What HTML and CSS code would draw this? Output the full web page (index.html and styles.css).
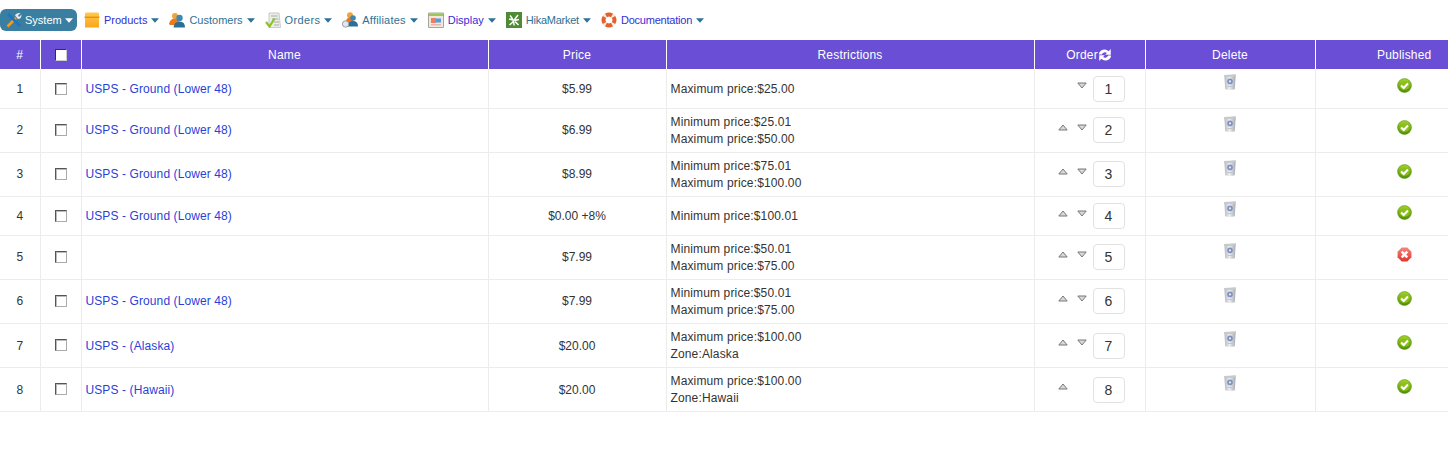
FILE: index.html
```html
<!DOCTYPE html>
<html lang="en">
<head>
<meta charset="utf-8">
<title>Shipping methods</title>
<link rel="stylesheet" href="styles.css">
</head>
<body>
<svg class="defs" width="0" height="0" aria-hidden="true">
  <defs>
    <linearGradient id="bin" x1="0" x2="1" y1="0" y2="0"><stop offset="0" stop-color="#b4b8bc"/><stop offset=".45" stop-color="#eceef1"/><stop offset="1" stop-color="#a6aaae"/></linearGradient>
    <linearGradient id="ok" x1="0" x2="0" y1="0" y2="1"><stop offset="0" stop-color="#a4d42a"/><stop offset="1" stop-color="#4f8f06"/></linearGradient>
    <linearGradient id="bad" x1="0" x2="0" y1="0" y2="1"><stop offset="0" stop-color="#f7847c"/><stop offset="1" stop-color="#e0352c"/></linearGradient>
    <linearGradient id="box" x1="0" x2="0" y1="0" y2="1"><stop offset="0" stop-color="#ffc84a"/><stop offset="1" stop-color="#fba51c"/></linearGradient>
    <symbol id="trash" viewBox="0 0 12 16">
      <path d="M.3 1 L11.7 .4 L10.8 15.2 Q6 16.2 1.2 15.2Z" fill="url(#bin)"/>
      <path d="M.3 1 L11.7 .4 V2.4 Q6 3.2 .3 2.7Z" fill="#c6c9cd"/>
      <circle cx="6" cy="7.4" r="2.8" fill="#7f90c4"/><circle cx="6" cy="7.4" r="1.1" fill="#e6e9f4"/>
      <path d="M3.4 12.5H8.6" stroke="#c2c5ca"/>
    </symbol>
    <symbol id="yes" viewBox="0 0 16 16">
      <circle cx="8" cy="8" r="7.4" fill="url(#ok)" stroke="#5a8f10" stroke-width=".6"/>
      <ellipse cx="8" cy="8.4" rx="5" ry="4.2" fill="#8cbf1e"/>
      <path d="M4.4 8 L7.1 10.6 L11.7 5.8" fill="none" stroke="#fff" stroke-width="2.2"/>
    </symbol>
    <symbol id="no" viewBox="0 0 16 16">
      <path d="M5 .6 H11 L15.4 5 V11 L11 15.4 H5 L.6 11 V5Z" fill="url(#bad)"/>
      <path d="M5 5 L11 11 M11 5 L5 11" stroke="#fff" stroke-width="2.6"/>
    </symbol>
    <symbol id="up" viewBox="0 0 10 7"><path d="M5 1 L9.2 6 H.8Z" fill="#d9d9d9" stroke="#777"/></symbol>
    <symbol id="down" viewBox="0 0 10 7"><path d="M5 6 L9.2 1 H.8Z" fill="#d9d9d9" stroke="#777"/></symbol>
    <symbol id="caret" viewBox="0 0 9 5"><path d="M0 0H9L4.5 5Z"/></symbol>
  </defs>
</svg>

<nav class="menu">
  <a class="item item-active" href="#">
    <svg class="ico" viewBox="0 0 16 16"><path d="M1.5 14.5 L10 6" stroke="#f39a1f" stroke-width="2.6"/><path d="M2 2 L14 14" stroke="#1d74c4" stroke-width="2.6"/><path d="M9 3.5 Q10 .5 14.5 1 L12 3.5 L13 5 L15.5 2.5 Q15.5 7 12 7Z" fill="#e4e8ec"/></svg>
    <span class="lbl">System</span><svg class="caret"><use href="#caret"/></svg>
  </a>
  <a class="item blue" href="#">
    <svg class="ico" viewBox="0 0 16 16"><path d="M1 2Q1 .5 2.5 .5H13.5Q15 .5 15 2V15.5H1Z" fill="url(#box)"/><path d="M.5 4.6H15.5V6H.5Z" fill="#e8910f"/></svg>
    <span class="lbl">Products</span><svg class="caret"><use href="#caret"/></svg>
  </a>
  <a class="item teal" href="#">
    <svg class="ico" viewBox="0 0 16 16"><circle cx="6" cy="4" r="3" fill="#f5a13a"/><path d="M0 12Q1 6.5 6 6.5Q9 6.5 10 10V13H1Z" fill="#ec7a1a"/><circle cx="10.5" cy="6" r="3.2" fill="#3d87b0"/><path d="M4.5 15.5Q5 9.5 10.5 9.5Q16 9.5 16 15.5Z" fill="#2b6f96"/></svg>
    <span class="lbl">Customers</span><svg class="caret"><use href="#caret"/></svg>
  </a>
  <a class="item teal sp-o" href="#">
    <svg class="ico" viewBox="0 0 16 16"><path d="M4 1H14L15.5 15.5H4Z" fill="#eceee8" stroke="#b4b8ae" stroke-width=".7"/><path d="M6 4H12.5M7 7H13.5M9 10H14M9 13H14" stroke="#a3aaa3"/><path d="M1 10L4.5 14.5L9.5 6.5" fill="none" stroke="#8fc02c" stroke-width="2.2"/></svg>
    <span class="lbl">Orders</span><svg class="caret"><use href="#caret"/></svg>
  </a>
  <a class="item teal sp-a" href="#">
    <svg class="ico" viewBox="0 0 16 16"><circle cx="8" cy="3.2" r="3" fill="#f5a13a"/><path d="M4 10Q4 5.5 8 5.5Q11 5.5 11 9L8 12Z" fill="#ec7a1a"/><circle cx="11" cy="6" r="2.8" fill="#3d87b0"/><path d="M6 14.5Q6 9 11 9Q16 9 16 14.5Z" fill="#2b6f96"/><circle cx="3.6" cy="12" r="3.2" fill="#e4e8ee" stroke="#7d8ca0" stroke-width=".8"/></svg>
    <span class="lbl">Affiliates</span><svg class="caret"><use href="#caret"/></svg>
  </a>
  <a class="item blue" href="#">
    <svg class="ico" viewBox="0 0 16 16"><path d="M.5 1H15.5V15.5H.5Z" fill="#f0e8dc" stroke="#a8a498"/><path d="M1 1.5H15V4H1Z" fill="#98c75a"/><path d="M3 6H8V11H3Z" fill="#ee7d66"/><path d="M8 6.5H13V10.5H8Z" fill="#4f9fdc"/><path d="M3 12.8H13" stroke="#e0a0a0"/></svg>
    <span class="lbl">Display</span><svg class="caret"><use href="#caret"/></svg>
  </a>
  <a class="item teal sp-h" href="#">
    <svg class="ico" viewBox="0 0 16 16"><path d="M0 0H16V16H0Z" fill="#4f8a36"/><path d="M8.2 13.5Q7.5 7 4 3.5M8 8.5Q10 5.5 12 3M7.5 8L3 7M8.5 8.5L13 7.5M7.5 9.5L3.5 13M9 9.5L12.5 13" fill="none" stroke="#fff" stroke-width="1.5"/></svg>
    <span class="lbl">HikaMarket</span><svg class="caret"><use href="#caret"/></svg>
  </a>
  <a class="item blue sp-d" href="#">
    <svg class="ico" viewBox="0 0 16 16"><circle cx="8" cy="8" r="5.4" fill="none" stroke="#f4ece6" stroke-width="4.6"/><path d="M4 1.8A7.5 7.5 0 0 1 12 1.8L10 5.2A3.4 3.4 0 0 0 6 5.2ZM4 14.2A7.5 7.5 0 0 0 12 14.2L10 10.8A3.4 3.4 0 0 1 6 10.8ZM1.8 4A7.5 7.5 0 0 0 1.8 12L5.2 10A3.4 3.4 0 0 1 5.2 6ZM14.2 4A7.5 7.5 0 0 1 14.2 12L10.8 10A3.4 3.4 0 0 0 10.8 6Z" fill="#e3622a"/></svg>
    <span class="lbl">Documentation</span><svg class="caret"><use href="#caret"/></svg>
  </a>
</nav>

<div class="clip">
<table class="grid">
  <colgroup>
    <col class="c-num"><col class="c-chk"><col class="c-name"><col class="c-price"><col class="c-rest"><col class="c-order"><col class="c-del"><col class="c-pub">
  </colgroup>
  <thead>
    <tr>
      <th>#</th>
      <th><span class="box box-head"></span></th>
      <th>Name</th>
      <th>Price</th>
      <th>Restrictions</th>
      <th><span class="ord-h">Order<svg class="save" viewBox="0 0 16 16"><path d="M1 7.5A6.6 6.6 0 0 1 12.2 3.6L14.6 1.2V7.6H8.2L10.2 5.6A3.9 3.9 0 0 0 4.4 7.5Z" fill="#fff"/><path d="M15 8.5A6.6 6.6 0 0 1 3.8 12.4L1.4 14.8V8.4H7.8L5.8 10.4A3.9 3.9 0 0 0 11.6 8.5Z" fill="#fff"/></svg></span></th>
      <th>Delete</th>
      <th>Published</th>
    </tr>
  </thead>
  <tbody>
    <tr class="r39 lo"><td class="ctr">1</td><td class="chk"><span class="box"></span></td><td class="nm"><a class="link" href="#">USPS - Ground (Lower 48)</a></td><td class="ctr">$5.99</td><td class="rest">Maximum price:$25.00</td>
      <td><div class="ord"><span class="arr"></span><span class="arr"><svg class="tri"><use href="#down"/></svg></span><span class="num">1</span></div></td>
      <td class="del"><svg class="bin"><use href="#trash"/></svg></td><td class="pubc"><svg class="pub"><use href="#yes"/></svg></td></tr>
    <tr class="r44"><td class="ctr">2</td><td class="chk"><span class="box"></span></td><td class="nm"><a class="link" href="#">USPS - Ground (Lower 48)</a></td><td class="ctr">$6.99</td><td class="rest">Minimum price:$25.01<br>Maximum price:$50.00</td>
      <td><div class="ord"><span class="arr"><svg class="tri"><use href="#up"/></svg></span><span class="arr"><svg class="tri"><use href="#down"/></svg></span><span class="num">2</span></div></td>
      <td class="del"><svg class="bin"><use href="#trash"/></svg></td><td class="pubc"><svg class="pub"><use href="#yes"/></svg></td></tr>
    <tr class="r44"><td class="ctr">3</td><td class="chk"><span class="box"></span></td><td class="nm"><a class="link" href="#">USPS - Ground (Lower 48)</a></td><td class="ctr">$8.99</td><td class="rest">Minimum price:$75.01<br>Maximum price:$100.00</td>
      <td><div class="ord"><span class="arr"><svg class="tri"><use href="#up"/></svg></span><span class="arr"><svg class="tri"><use href="#down"/></svg></span><span class="num">3</span></div></td>
      <td class="del"><svg class="bin"><use href="#trash"/></svg></td><td class="pubc"><svg class="pub"><use href="#yes"/></svg></td></tr>
    <tr class="r39"><td class="ctr">4</td><td class="chk"><span class="box"></span></td><td class="nm"><a class="link" href="#">USPS - Ground (Lower 48)</a></td><td class="ctr">$0.00 +8%</td><td class="rest">Minimum price:$100.01</td>
      <td><div class="ord"><span class="arr"><svg class="tri"><use href="#up"/></svg></span><span class="arr"><svg class="tri"><use href="#down"/></svg></span><span class="num">4</span></div></td>
      <td class="del"><svg class="bin"><use href="#trash"/></svg></td><td class="pubc"><svg class="pub"><use href="#yes"/></svg></td></tr>
    <tr class="r44"><td class="ctr">5</td><td class="chk"><span class="box"></span></td><td class="nm"></td><td class="ctr">$7.99</td><td class="rest">Minimum price:$50.01<br>Maximum price:$75.00</td>
      <td><div class="ord"><span class="arr"><svg class="tri"><use href="#up"/></svg></span><span class="arr"><svg class="tri"><use href="#down"/></svg></span><span class="num">5</span></div></td>
      <td class="del"><svg class="bin"><use href="#trash"/></svg></td><td class="pubc"><svg class="pub"><use href="#no"/></svg></td></tr>
    <tr class="r44"><td class="ctr">6</td><td class="chk"><span class="box"></span></td><td class="nm"><a class="link" href="#">USPS - Ground (Lower 48)</a></td><td class="ctr">$7.99</td><td class="rest">Minimum price:$50.01<br>Maximum price:$75.00</td>
      <td><div class="ord"><span class="arr"><svg class="tri"><use href="#up"/></svg></span><span class="arr"><svg class="tri"><use href="#down"/></svg></span><span class="num">6</span></div></td>
      <td class="del"><svg class="bin"><use href="#trash"/></svg></td><td class="pubc"><svg class="pub"><use href="#yes"/></svg></td></tr>
    <tr class="r44 lo"><td class="ctr">7</td><td class="chk"><span class="box"></span></td><td class="nm"><a class="link" href="#">USPS - (Alaska)</a></td><td class="ctr">$20.00</td><td class="rest">Maximum price:$100.00<br>Zone:Alaska</td>
      <td><div class="ord"><span class="arr"><svg class="tri"><use href="#up"/></svg></span><span class="arr"><svg class="tri"><use href="#down"/></svg></span><span class="num">7</span></div></td>
      <td class="del"><svg class="bin"><use href="#trash"/></svg></td><td class="pubc"><svg class="pub"><use href="#yes"/></svg></td></tr>
    <tr class="r44 lo"><td class="ctr">8</td><td class="chk"><span class="box"></span></td><td class="nm"><a class="link" href="#">USPS - (Hawaii)</a></td><td class="ctr">$20.00</td><td class="rest">Maximum price:$100.00<br>Zone:Hawaii</td>
      <td><div class="ord"><span class="arr"><svg class="tri"><use href="#up"/></svg></span><span class="arr"></span><span class="num">8</span></div></td>
      <td class="del"><svg class="bin"><use href="#trash"/></svg></td><td class="pubc"><svg class="pub"><use href="#yes"/></svg></td></tr>
  </tbody>
</table>
</div>
</body>
</html>
```
FILE: styles.css
```css
html, body { margin: 0; padding: 0; background: #fff; overflow: hidden; }
body { font-family: "Liberation Sans", Arial, sans-serif; font-size: 12px; color: #333; }
.defs { position: absolute; }

.menu { display: flex; align-items: center; height: 40px; box-sizing: border-box; }
.item { display: flex; align-items: center; height: 22px; padding: 0 0 0 7px; text-decoration: none; font-size: 11px; margin-right: 3px; }
.item-active { background: #3a7fa2; color: #fff; border-radius: 6px; width: 77px; box-sizing: border-box; padding-left: 6px; padding-right: 3px; margin-right: 0; }
.blue { color: #2f2fd8; }
.teal { color: #2f6f92; }
.sp-o .lbl { letter-spacing: .35px; }
.sp-a .lbl { letter-spacing: .2px; }
.sp-h .lbl { letter-spacing: -.25px; }
.sp-d .lbl { letter-spacing: -.22px; }
.ico { width: 16px; height: 16px; flex: none; margin-right: 4px; }
.item-active .ico { margin-right: 3px; }
.caret { width: 8px; height: 5px; margin-left: 4px; fill: #2f7299; flex: none; }
.item-active .caret { fill: #fff; margin-left: 3px; }

.clip { width: 1448px; overflow: hidden; }
.grid { border-collapse: collapse; table-layout: fixed; width: 1493px; }
.c-num { width: 40px; } .c-chk { width: 41px; } .c-name { width: 407px; } .c-price { width: 178px; }
.c-rest { width: 368px; } .c-order { width: 111px; } .c-del { width: 170px; } .c-pub { width: 178px; }

th { background: #6a4fd6; color: #fff; font-weight: normal; height: 29px; padding: 0; border-left: 1px solid #fff; text-align: center; font-size: 12px; letter-spacing: .2px; }
th:first-child { border-left: 0; }
td { padding: 0 4px; border-left: 1px solid #ececec; border-bottom: 1px solid #ececec; font-size: 12px; line-height: 17px; color: #333; box-sizing: border-box; }
td:first-child { border-left: 0; }
.r39 td { height: 39px; }
.r44 td { height: 44px; }
.ctr { text-align: center; padding: 1px 0 0; }
.nm { padding-top: 1px; }
.lo .ctr, .lo .nm { padding-top: 3px; }
.chk { text-align: center; padding: 0; }
.rest { padding-top: 2px; letter-spacing: .14px; }
.del { padding: 0 0 13px; }
.pubc { text-align: center; padding: 0 0 5px; }
.r39 .pubc { padding-bottom: 6px; }
.link { color: #2a3fd8; text-decoration: none; letter-spacing: .1px; }

.box { display: inline-block; width: 10px; height: 10px; border: 1px solid; border-color: #555 #aaa #aaa #555; background: #fff; vertical-align: middle; box-shadow: inset 1px 1px 0 #bbb; }
.box-head { border-color: #333 #ccc #ccc #333; box-shadow: none; }

.ord-h { display: inline-flex; align-items: center; margin-right: 1px; }
.save { width: 14px; height: 14px; }
.ord { display: flex; justify-content: flex-end; align-items: center; padding-right: 16px; }
.arr { display: block; width: 19px; text-align: center; height: 14px; margin-top: -8px; }
.tri { width: 10px; height: 7px; }
.num { width: 30px; height: 24px; margin-left: 1px; line-height: 25px; text-align: center; border: 1px solid #e2e2e2; border-radius: 4px; font-size: 14px; color: #333; background: #fff; }
.lo .num { margin-top: 2px; }
.bin { display: block; width: 12px; height: 16px; margin: 0 auto; }
.pub { width: 15px; height: 15px; vertical-align: middle; }
```
